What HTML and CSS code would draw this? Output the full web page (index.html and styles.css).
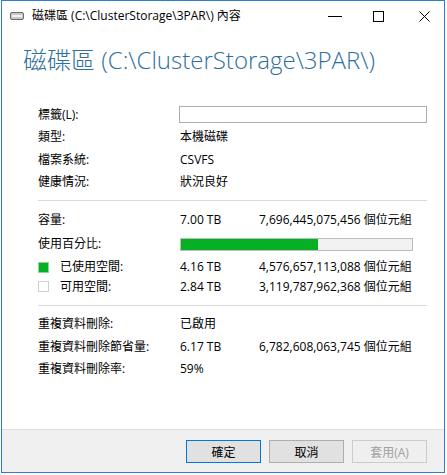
FILE: index.html
```html
<!DOCTYPE html>
<html lang="zh-Hant">
<head>
<meta charset="utf-8">
<title>磁碟區 內容</title>
<link rel="stylesheet" href="styles.css">
</head>
<body>
<div class="window">
  <div class="titlebar">
    <svg class="drive-icon" width="14" height="8" viewBox="0 0 14 8">
      <rect x="0.5" y="0.5" width="13" height="7" rx="1.5" fill="#c9c9c9" stroke="#6a6a6a"/>
      <rect x="2" y="3" width="10" height="2" fill="#f2f2f2"/>
    </svg>
    <span class="title">磁碟區 (C:\ClusterStorage\3PAR\) 內容</span>
    <div class="controls">
      <span class="ctl ctl-min"><svg width="14" height="1" viewBox="0 0 14 1"><rect width="14" height="1" fill="#000"/></svg></span>
      <span class="ctl ctl-max"><svg width="11" height="11" viewBox="0 0 11 11"><rect x="0.5" y="0.5" width="10" height="10" fill="none" stroke="#000"/></svg></span>
      <span class="ctl ctl-close"><svg width="11" height="11" viewBox="0 0 11 11"><path d="M0.5 0.5L10.5 10.5M10.5 0.5L0.5 10.5" stroke="#000" stroke-width="1"/></svg></span>
    </div>
  </div>

  <div class="content">
    <h1 class="header">磁碟區 (C:\ClusterStorage\3PAR\)</h1>

    <div class="grid general">
      <div class="row r23"><span class="label">標籤(L):</span><span class="textbox"></span></div>
      <div class="row r22"><span class="label">類型:</span><span class="value">本機磁碟</span></div>
      <div class="row r23"><span class="label">檔案系統:</span><span class="value">CSVFS</span></div>
      <div class="row r22"><span class="label">健康情況:</span><span class="value">狀況良好</span></div>
    </div>

    <div class="sep sep-1"></div>

    <div class="grid capacity">
      <div class="row r23"><span class="label">容量:</span><span class="value">7.00 TB</span><span class="bytes">7,696,445,075,456 個位元組</span></div>
      <div class="row r26"><span class="label">使用百分比:</span><span class="progress"><span class="progress-fill" style="width:59.4%"></span></span></div>
      <div class="row r20"><span class="label legend"><span class="swatch swatch-used"></span>已使用空間:</span><span class="value">4.16 TB</span><span class="bytes">4,576,657,113,088 個位元組</span></div>
      <div class="row r19"><span class="label legend"><span class="swatch swatch-free"></span>可用空間:</span><span class="value">2.84 TB</span><span class="bytes">3,119,787,962,368 個位元組</span></div>
    </div>

    <div class="sep sep-2"></div>

    <div class="grid dedup">
      <div class="row r22"><span class="label">重複資料刪除:</span><span class="value">已啟用</span></div>
      <div class="row r23"><span class="label">重複資料刪除節省量:</span><span class="value">6.17 TB</span><span class="bytes">6,782,608,063,745 個位元組</span></div>
      <div class="row r22"><span class="label">重複資料刪除率:</span><span class="value">59%</span></div>
    </div>
  </div>

  <div class="footer">
    <button class="btn btn-default">確定</button>
    <button class="btn">取消</button>
    <button class="btn btn-disabled" disabled>套用(A)</button>
  </div>
</div>
</body>
</html>
```

FILE: styles.css
```css
html, body {
  margin: 0;
  padding: 0;
  background: #ffffff;
}

body {
  font-family: "Open Sans", "Noto Sans CJK TC", sans-serif;
  font-size: 12px;
  color: #000;
}

.window {
  box-sizing: border-box;
  width: 444px;
  height: 473px;
  margin-left: 1px;
  border: 1px solid #2b7fcf;
  background: #fff;
  display: flex;
  flex-direction: column;
}

.titlebar {
  height: 30px;
  display: flex;
  align-items: center;
  flex: none;
}

.drive-icon {
  margin-left: 8px;
  flex: none;
}

.title {
  margin-left: 8px;
  font-size: 12px;
  line-height: 16px;
  white-space: nowrap;
}

.controls {
  margin-left: auto;
  display: flex;
  align-items: center;
  height: 30px;
}

.ctl {
  display: flex;
  align-items: center;
  justify-content: center;
  height: 30px;
}

.ctl svg { display: block; }

.ctl-min { width: 14px; margin-right: 31px; }
.ctl-max { width: 11px; margin-right: 35px; }
.ctl-close { width: 11px; margin-right: 14px; }

.content {
  flex: 1;
  padding: 0 17px 0 36px;
}

.header {
  margin: 14px 0 28px -15px;
  font-family: "Open Sans", "Noto Sans CJK TC", sans-serif;
  font-weight: 300;
  font-size: 24px;
  line-height: 30px;
  height: 30px;
  color: #2f6f9c;
  white-space: nowrap;
}

.grid {
  display: flex;
  flex-direction: column;
}

.row {
  display: grid;
  grid-template-columns: 142px 79px 1fr;
  align-items: center;
  line-height: 16px;
  white-space: nowrap;
}

.r19 { height: 19px; }
.r20 { height: 20px; }
.r22 { height: 22px; }
.r23 { height: 23px; }
.r26 { height: 26px; }

.label { grid-column: 1; }
.value { grid-column: 2; }
.bytes { grid-column: 3; }

.legend {
  display: flex;
  align-items: center;
}

.swatch {
  box-sizing: border-box;
  width: 11px;
  height: 11px;
  margin-right: 11px;
  flex: none;
}

.swatch-used {
  background: #06b025;
  border: 1px solid #8fd49a;
}

.swatch-free {
  background: #fff;
  border: 1px solid #d0d0d0;
}

.textbox {
  grid-column: 2 / 4;
  box-sizing: border-box;
  height: 17px;
  margin-left: -1px;
  border: 1px solid #acacac;
  background: #fff;
}

.progress {
  grid-column: 2 / 4;
  box-sizing: border-box;
  width: 233px;
  height: 13px;
  border: 1px solid #bcbcbc;
  background: #f2f2f2;
  display: flex;
}

.progress-fill {
  display: block;
  height: 100%;
  background: #06b025;
}

.sep {
  height: 1px;
  background: #d9d9d9;
}

.sep-1 { margin-top: 7px; margin-bottom: 7px; }
.sep-2 { margin-top: 9px; margin-bottom: 7px; }

.footer {
  flex: none;
  height: 43px;
  box-sizing: border-box;
  border-top: 1px solid #dfdfdf;
  background: #f0f0f0;
  display: flex;
  justify-content: flex-end;
  align-items: flex-start;
  gap: 8px;
  padding: 10px 17px 0 0;
}

.btn {
  box-sizing: border-box;
  width: 75px;
  height: 23px;
  margin: 0;
  padding: 0;
  font-family: "Open Sans", "Noto Sans CJK TC", sans-serif;
  font-size: 12px;
  color: #000;
  background: #e1e1e1;
  border: 1px solid #adadad;
  border-radius: 0;
}

.btn-default {
  border-color: #0078d7;
}

.btn-disabled {
  background: #efefef;
  border-color: #cccccc;
  color: #a0a0a0;
}
```
